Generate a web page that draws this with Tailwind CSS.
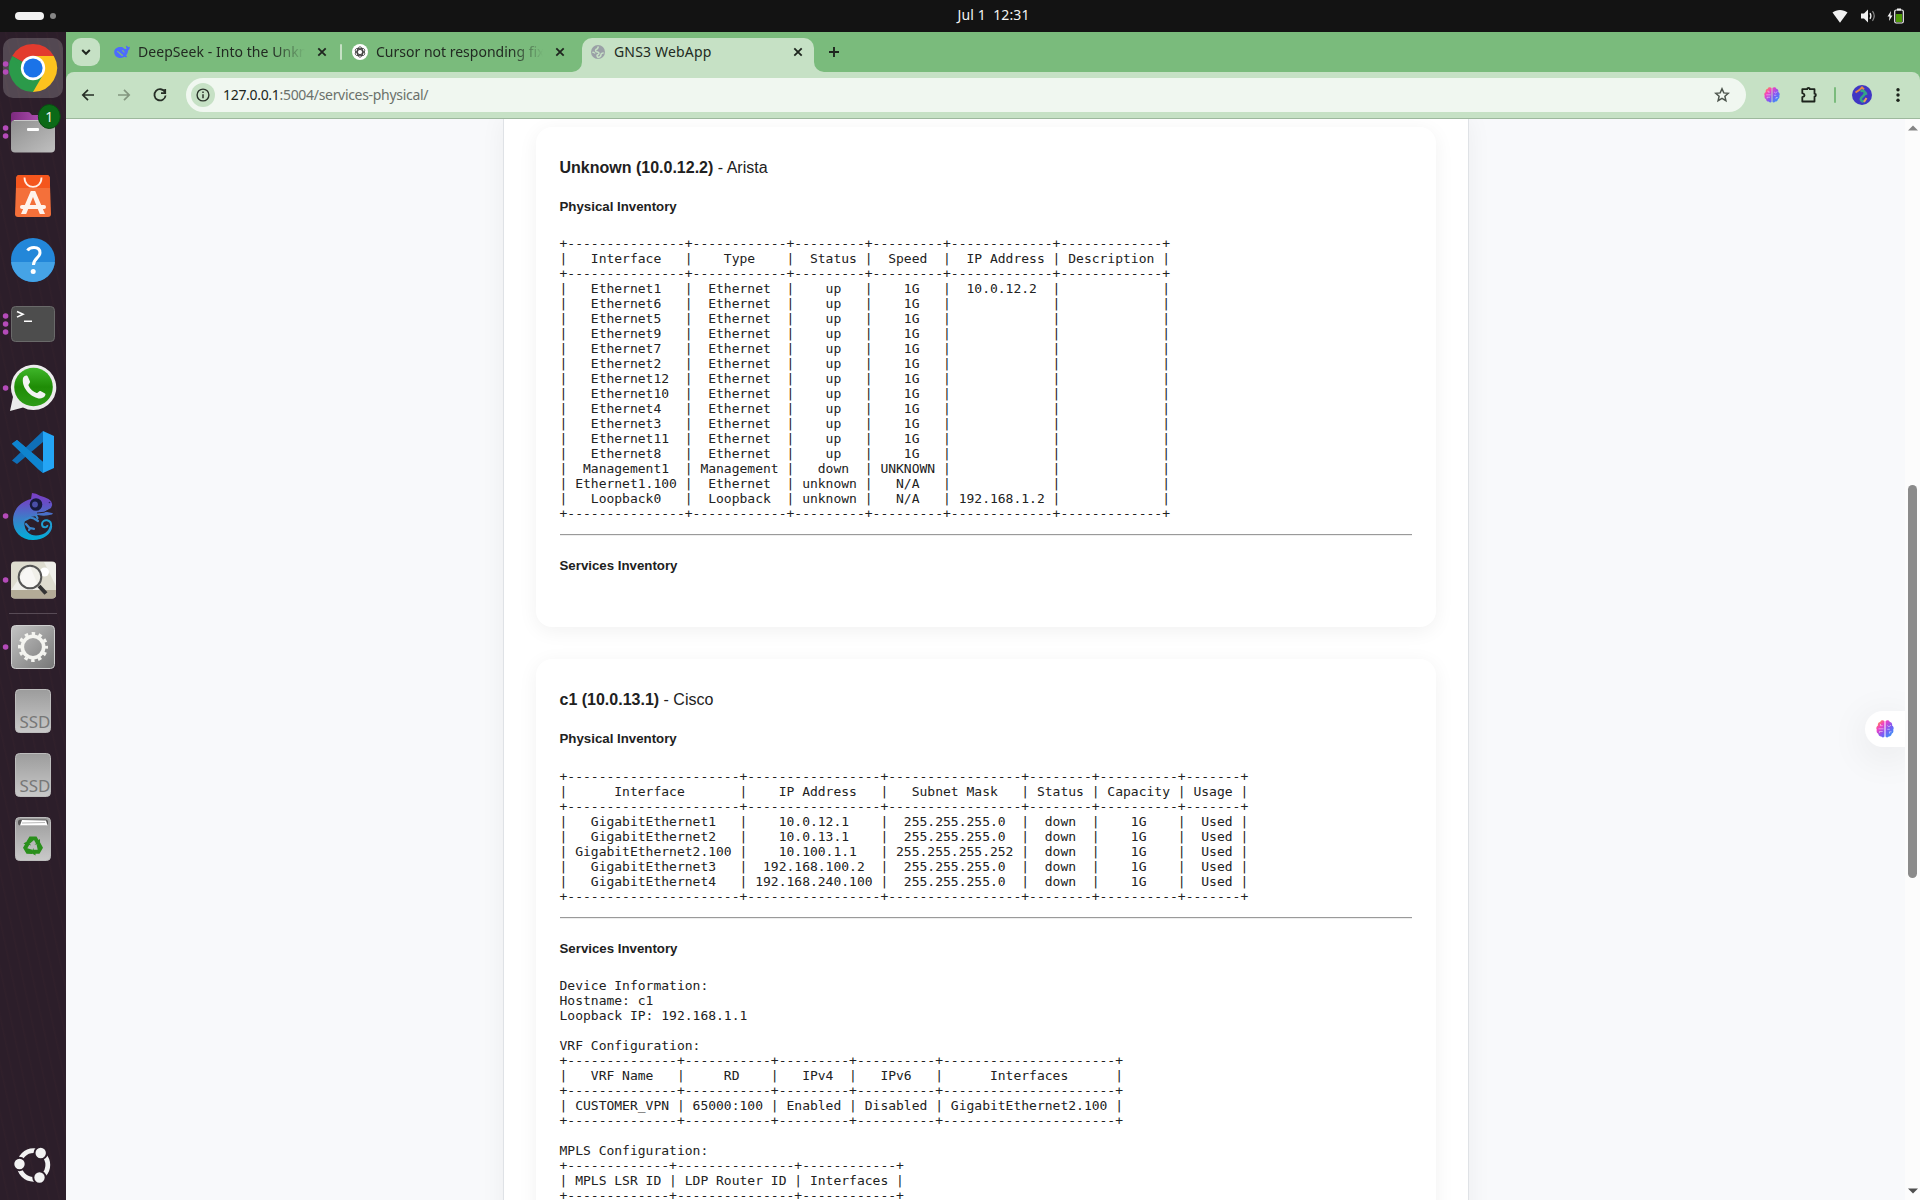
<!DOCTYPE html>
<html lang="en">
<head>
<meta charset="utf-8">
<title>GNS3 WebApp</title>
<script src="https://cdn.jsdelivr.net/npm/@tailwindcss/browser@4"></script>
</head>
<body class="w-[1920px] h-[1200px] overflow-hidden flex flex-col bg-[#f8f9fb] text-[#212121]">

<svg class="absolute w-0 h-0" aria-hidden="true">
  <defs>
    <linearGradient id="brain" x1="0" y1="0" x2="1" y2="1"><stop offset=".05" stop-color="#ff9a3c"/><stop offset=".3" stop-color="#f13fc4"/><stop offset=".6" stop-color="#7a5cf5"/><stop offset="1" stop-color="#22a7f5"/></linearGradient>
    <linearGradient id="folder" x1="0" y1="0" x2="1" y2="1"><stop offset="0" stop-color="#8f8f8f"/><stop offset="1" stop-color="#c0c0c0"/></linearGradient>
    <linearGradient id="purple" x1="0" y1="0" x2="1" y2="0"><stop offset="0" stop-color="#7c2a7f"/><stop offset="1" stop-color="#c45fc6"/></linearGradient>
    <linearGradient id="ssd" x1="0" y1="0" x2="0" y2="1"><stop offset="0" stop-color="#9c9c9c"/><stop offset="1" stop-color="#c9c9c9"/></linearGradient>
    <linearGradient id="gear" x1="0" y1="0" x2="1" y2="1"><stop offset="0" stop-color="#c4c4c4"/><stop offset="1" stop-color="#767676"/></linearGradient>
    <linearGradient id="wa" x1="0" y1="0" x2="0" y2="1"><stop offset="0" stop-color="#3fb62a"/><stop offset=".5" stop-color="#1f8c06"/><stop offset="1" stop-color="#2f9c18"/></linearGradient>
    <linearGradient id="cham" gradientUnits="userSpaceOnUse" x1="0" y1="9" x2="0" y2="56"><stop offset="0" stop-color="#7a3fc4"/><stop offset=".2" stop-color="#6a4cc6"/><stop offset=".55" stop-color="#3b7fc9"/><stop offset="1" stop-color="#00b0d8"/></linearGradient>
    <symbol id="brainIcon" viewBox="0 0 18 18">
      <path d="M8.500 1.200C7.200-.2 4.600.2 4.200 2 2.400 2.200 1.400 3.900 2 5.500.2 6.300-.1 8.800.8 9.800.2 11.600 1 13.300 2.300 13.700 2.500 15.700 4 16.600 5.300 16.400 6.400 18 8.200 17.500 8.500 16.600zM9.500 1.200C10.800-.2 13.400.2 13.800 2c1.800.2 2.800 1.900 2.200 3.500 1.800.8 2.100 3.300 1.200 4.300.6 1.800-.2 3.500-1.500 3.900-.2 2-1.700 2.900-3 2.700-1.100 1.600-2.900 1.100-3.200.2z" fill="url(#brain)"/>
      <path d="M2.500 8.800h5M4.500 4v1.700h2.200M3.500 12.800v-1.300h3.200M11.300 5.500l1.600 1.300L15 5.200M13.500 13.500v-1.700h2M11.300 9.300h2.500" fill="none" stroke="#fff" stroke-opacity=".55" stroke-width=".9"/>
    </symbol>
  </defs>
</svg>

<!-- system bar -->
<header class="h-8 shrink-0 bg-[#131313] flex items-center relative font-['Noto_Sans']">
  <span class="ml-[15px] w-[29px] h-2 rounded-full bg-[#f2f2f2]"></span>
  <span class="ml-[6px] w-[6px] h-[6px] rounded-full bg-[#868686]"></span>
  <span class="absolute left-[957.5px] top-[5px] text-[14px] leading-[19px] tracking-[0.1px] text-[#f2f2f2] whitespace-pre">Jul 1  12:31</span>
  <svg class="ml-auto mr-[14px]" width="74" height="16" viewBox="0 0 74 16">
    <path d="M.5 4.500C4.500 1 11.500 1 15.500 4.500L8 14.700z" fill="#f2f2f2"/>
    <path d="M29 5.500h3l4-4v13l-4-4h-3z" fill="#f2f2f2"/>
    <path d="M38 5.200q1.800 2.800 0 5.600" fill="none" stroke="#f2f2f2" stroke-width="1.300"/>
    <path d="M40.500 3.200q3.500 4.800 0 9.600" fill="none" stroke="#8a8a8a" stroke-width="1.200"/>
    <path d="M59 3l-3.500 5.500h2L57 13l3.500-5.500h-2z" fill="#f2f2f2"/>
    <path d="M65 .5h4v2h-4z" fill="#f2f2f2"/><rect x="62.700" y="2" width="8.600" height="13" rx="1.500" fill="none" stroke="#f2f2f2" stroke-width="1.200"/><path d="M64 6h6v8h-6z" fill="#4e9a06"/>
  </svg>
</header>

<div class="flex flex-1 min-h-0">
  <!-- dock -->
  <aside class="w-[66px] shrink-0 bg-[repeating-linear-gradient(78deg,#2c1e2a_0px,#2c1e2a_7px,#30202b_8px,#2c1e2a_10px)] flex flex-col pt-1">
    <svg width="66" height="64"><rect x="3" y="2" width="60" height="60" rx="10" fill="#fff" fill-opacity=".19"/>
      <g fill="#b44bb9"><circle cx="5.600" cy="28" r="2.800"/><circle cx="5.600" cy="36" r="2.800"/></g>
      <path d="M33 32L12.200 20A24 24 0 0 1 53.800 20z" fill="#e33b2e"/><path d="M33 32L12.200 20A24 24 0 0 0 33 56z" fill="#2b9a4a"/><path d="M33 32L53.800 20A24 24 0 0 1 33 56z" fill="#fcc31e"/>
      <path d="M33 20H53.800L43.400 38L33 56L44 36z" fill="#fcc31e"/><path d="M22.600 38L12.200 20L24 36zM33 56l10.400-18L33 44 22.600 38z" fill="#2b9a4a"/>
      <circle cx="33" cy="32" r="12.200" fill="#fff"/><circle cx="33" cy="32" r="9.600" fill="#1a73e8"/></svg>
    <svg width="66" height="64"><g fill="#b44bb9"><circle cx="5.600" cy="28" r="2.800"/><circle cx="5.600" cy="36" r="2.800"/></g>
      <path d="M11 24V15q0-3 3-3h14q2 0 3 2l1 1h18q4 0 4 4v5z" fill="url(#purple)"/><rect x="11" y="20" width="44" height="32.500" rx="4" fill="url(#folder)"/><path d="M14 20.500h38" stroke="#c8c8c8"/><rect x="27" y="28" width="12" height="3" rx="1" fill="#fff"/>
      <ellipse cx="49.300" cy="16.500" rx="11" ry="12" fill="#0b6a17" stroke="#0a4a12"/><text x="49.300" y="21.500" text-anchor="middle" font-family="Noto Sans" font-size="14" fill="#f2f2f2">1</text></svg>
    <svg width="66" height="64"><path d="M19 11h28q2.500 0 2.700 2.500L51 50q0 3-3 3H18q-3 0-3-3l1.300-36.500Q16.500 11 19 11z" fill="#f4703a"/><path d="M19 11h28q2.500 0 2.700 2.500L50 24H16l.3-10.500Q16.500 11 19 11z" fill="#f4561d"/><path d="M24.500 13.500c0 12.500 17 12.500 17 0" fill="none" stroke="#fff0e6" stroke-width="1.800"/><path d="M30.800 27h4.400L45 50h-5.200L33 33l-6.800 17H21z" fill="#fff3ec"/><rect x="20" y="41" width="26" height="4" rx="2" fill="#fff3ec"/></svg>
    <svg width="66" height="64"><circle cx="33" cy="32" r="22" fill="#2387d9"/><path d="M11.100 34a22 22 0 0 0 43.800 0z" fill="#45a3e6"/><path d="M27.500 22.500q2-3 6.500-3c4 0 6 2.200 6 5.300 0 5-6.500 5.500-6.500 12.200" fill="none" stroke="#fff" stroke-width="3"/><circle cx="33.200" cy="43.500" r="2.500" fill="#fff"/></svg>
    <svg width="66" height="64"><g fill="#b44bb9"><circle cx="5.600" cy="24" r="2.800"/><circle cx="5.600" cy="32" r="2.800"/><circle cx="5.600" cy="40" r="2.800"/></g><rect x="11.500" y="14.500" width="43" height="35" rx="4" fill="#4d4d4d" stroke="#6a6a6a"/><path d="M17 19.500l6 2.800-6 2.800M24 29.200h8" fill="none" stroke="#fff" stroke-width="1.600"/></svg>
    <svg width="66" height="64"><circle cx="5.600" cy="32" r="2.800" fill="#b44bb9"/><path d="M10 55l3-14A22.700 22.700 0 1 1 23 51.500z" fill="#ececec"/><circle cx="33.500" cy="31" r="19.300" fill="url(#wa)"/><path d="M23 22c2-3 4-3 5-1l2 4.500c.5 1.500-2 2.500-1.500 4 2 4 4.500 6 8 7.500 1.500.5 2.500-2.500 4-2l4.500 2.500c1.500 1-1 5-5 5C33 42.500 21 33 23 22z" fill="#f3f3f3"/></svg>
    <svg width="66" height="64"><path d="M12 23.500l5-3.500L43 42v11z" fill="#1588d4"/><path d="M12 40.500l5 3.500L43 22V11z" fill="#0f6fb8"/><path d="M43 11l11 5v32l-11 5z" fill="#24a5f5"/><path d="M12 24l5-4 26 22v11L39 50z" fill="#0e84cf"/></svg>
    <svg width="66" height="64"><circle cx="5.600" cy="32" r="2.800" fill="#b44bb9"/>
      <path d="M32 9q4 0 8 2.800 5 1.200 8.500 3.200 3.500 2 3.700 6l-1.200 3-6 3.500 8 1.700-1 1.300q-7 2-14 .5l-4 1.500C27 33 24 36 24.500 41c.8 6 5 10.500 11.500 10.500 7 0 13-4 13.500-9l2.700-.5C52 50 43 56 33 56 21 56 13 48 13 36 13 26 20 18 31 15z" fill="url(#cham)"/>
      <path d="M51 43.500c1.500-9-9-9-9-3.500 0 4.500 6 4 5.300 1" fill="none" stroke="#1f9fd2" stroke-width="2"/>
      <path d="M25 36l5-2.500 4 1 4 2.500M36 31.500l1.500 2.500M26 40l4 4.500-1 1.500M30 44l4 .8" fill="none" stroke="#3a86cb" stroke-width="2.200" stroke-linecap="round"/>
      <circle cx="36" cy="20.500" r="6.300" fill="#171a3c"/><circle cx="35" cy="20.500" r="2.900" fill="#4a4fa8"/><circle cx="49.500" cy="18.500" r=".8" fill="#2a2560"/><path d="M37 29q8 0 12-3" fill="none" stroke="#2c1e2a" stroke-width="1"/></svg>
    <svg width="66" height="64"><circle cx="5.600" cy="32" r="2.800" fill="#b44bb9"/><rect x="11" y="13.500" width="45" height="37" rx="4" fill="#dedccf"/><path d="M11 42h45v4.500q0 4-4 4H15q-4 0-4-4z" fill="#b3ab97"/><path d="M11 42L29 16l11 26zM44 14h8q4 0 4 4v20z" fill="#efeee9"/><circle cx="44.500" cy="24" r="4.500" fill="#fff"/><circle cx="30" cy="29" r="11.300" fill="#fff" fill-opacity=".55" stroke="#555" stroke-width="2"/><path d="M39 38l7 7.500" stroke="#333" stroke-width="4"/></svg>
    <div class="h-[3px] mx-[9px] flex items-center"><span class="h-px w-full bg-[#584b56]"></span></div>
    <svg width="66" height="64"><circle cx="5.600" cy="32" r="2.800" fill="#b44bb9"/><rect x="11.500" y="10.500" width="43" height="43" rx="4" fill="url(#gear)" stroke="#cfcfcf"/><circle cx="33" cy="32" r="10.700" fill="none" stroke="#f4f4f0" stroke-width="3.600"/><circle cx="33" cy="32" r="13.500" fill="none" stroke="#f4f4f0" stroke-width="3" stroke-dasharray="3.500 3.568" stroke-dashoffset="1.750"/></svg>
    <svg width="66" height="64"><rect x="15.500" y="10.500" width="35" height="43" rx="4" fill="url(#ssd)" stroke="#bdbdbd"/><text x="19.500" y="49" font-family="Noto Sans" font-size="16" fill="#777" textLength="31" lengthAdjust="spacingAndGlyphs">SSD</text></svg>
    <svg width="66" height="64"><rect x="15.500" y="10.500" width="35" height="43" rx="4" fill="url(#ssd)" stroke="#bdbdbd"/><text x="19.500" y="49" font-family="Noto Sans" font-size="16" fill="#777" textLength="31" lengthAdjust="spacingAndGlyphs">SSD</text></svg>
    <svg width="66" height="64"><rect x="15.500" y="10.500" width="35" height="43" rx="4" fill="url(#ssd)" stroke="#bdbdbd"/><rect x="18" y="12.500" width="30" height="6" rx="2.500" fill="#555"/><path d="M20 18.500l2-5.500 24 .5 1.500 5z" fill="#fff"/><path d="M22 16l23-.5" stroke="#999" stroke-width=".7"/>
      <g transform="translate(33 39)" fill="#2a8f1c"><g id="arrow"><path d="M-6.500-4.500L-3.500-9.500H3.500L5.500-6l1.500-1v5.500H1.500l1.500-1L1-6-3-2.500z"/></g><use href="#arrow" transform="rotate(120)"/><use href="#arrow" transform="rotate(240)"/></g></svg>
    <svg class="mt-auto mb-[3px]" width="66" height="64"><g transform="translate(33.500 32)"><circle r="14.300" fill="none" stroke="#f2f2f2" stroke-width="4.800"/><g fill="#f2f2f2" stroke="#2c1e2a" stroke-width="2"><circle cx="-14" cy="-1" r="6.200"/><circle cx="7.200" cy="-12" r="6.200"/><circle cx="6" cy="12.500" r="6.200"/></g></g></svg>
  </aside>

  <main class="flex-1 min-w-0 flex flex-col">
    <!-- tab strip -->
    <div class="h-10 shrink-0 bg-[#7abb7c] flex items-center relative font-['Noto_Sans'] text-[14px] leading-5 text-[#222a22] whitespace-nowrap">
      <div class="ml-[6px] size-7 rounded-[9px] bg-[#c6e1c5] flex items-center justify-center"><svg width="12" height="12" viewBox="0 0 12 12"><path d="M2.200 4L6 7.800 9.800 4" fill="none" stroke="#1f261f" stroke-width="2"/></svg></div>
      <svg class="ml-[14px]" width="16" height="16" viewBox="0 0 16 16"><path d="M15.800 2.500c-1 .8-2 .6-2.600-.2-.5-.8-1.400-.6-1.300.3.100.8.400 1.300.9 1.700-.8 1-1.500 1-2.700.1C8.300 3 8 2.900 7 3 3 2.500.3 5 .2 8c0 4 3.300 6.200 6.500 6 1.600 0 2.800-.6 3.500-1.200 1.500.8 3 .3 2.800-.4-.2-.4-.8-.2-1-.8 1.500-1.600 2-3.500 2-5.100 1.200-.5 2-2 1.800-4z" fill="#4d6bfe"/><path d="M3 7.500c2.500 0 3.500 4 6 4M8 6.500c1 0 2 .8 2.200 2" fill="none" stroke="#7abb7c" stroke-width="1.200"/></svg>
      <span class="ml-2 w-[167px] overflow-hidden tracking-[0.05px] [mask-image:linear-gradient(to_right,#000_135px,transparent_167px)]">DeepSeek - Into the Unkn</span>
      <svg class="ml-[11px]" width="12" height="12" viewBox="0 0 12 12"><path d="M2.300 2.300l7.400 7.400M9.700 2.300L2.300 9.700" stroke="#1f261f" stroke-width="1.800"/></svg>
      <span class="ml-[12px] w-[2px] h-4 rounded bg-[#c6e1c5]"></span>
      <svg class="ml-[10px]" width="16" height="16" viewBox="0 0 16 16"><circle cx="8" cy="8" r="8" fill="#fff"/><g fill="none" stroke="#333" stroke-width=".8"><ellipse cx="8" cy="8" rx="2.900" ry="5.200"/><ellipse cx="8" cy="8" rx="2.900" ry="5.200" transform="rotate(60 8 8)"/><ellipse cx="8" cy="8" rx="2.900" ry="5.200" transform="rotate(120 8 8)"/><path d="M8 5.300l2.400 1.400v2.700L8 10.700 5.600 9.400V6.700z"/></g></svg>
      <span class="ml-2 w-[167px] overflow-hidden [mask-image:linear-gradient(to_right,#000_135px,transparent_167px)]">Cursor not responding fix</span>
      <svg class="ml-[11px]" width="12" height="12" viewBox="0 0 12 12"><path d="M2.300 2.300l7.400 7.400M9.700 2.300L2.300 9.700" stroke="#1f261f" stroke-width="1.800"/></svg>
      <div class="ml-4 w-[232px] h-[34px] self-end rounded-t-[10px] bg-[#c6e1c5] flex items-center relative pb-[6px]">
        <svg class="absolute -left-[10px] bottom-0" width="10" height="10"><path d="M10 0v10H0A10 10 0 0 0 10 0z" fill="#c6e1c5"/></svg>
        <svg class="absolute -right-[10px] bottom-0" width="10" height="10"><path d="M0 0v10h10A10 10 0 0 1 0 0z" fill="#c6e1c5"/></svg>
        <svg class="ml-[9px]" width="14" height="14" viewBox="0 0 14 14"><circle cx="7" cy="7" r="7" fill="#9aa0a6"/><path d="M7.500 1.500c-1 1-.3 2-1.500 2.500S4 5.500 5 6.500s3 0 3 1.800-2 1.200-2 2.200 .5 1.500 1 2c2-.2 3-1.500 3-3s2-.8 2.500-2M1.500 7c1 .5 2 .5 2.500 1.500" fill="none" stroke="#c6e1c5" stroke-width="1.500"/></svg>
        <span class="ml-[9px] w-[120px] tracking-[0.18px]">GNS3 WebApp</span>
        <svg class="ml-auto mr-[10px]" width="12" height="12" viewBox="0 0 12 12"><path d="M2.300 2.300l7.400 7.400M9.700 2.300L2.300 9.700" stroke="#1f261f" stroke-width="1.800"/></svg>
      </div>
      <svg class="ml-[14px]" width="12" height="12" viewBox="0 0 12 12"><path d="M6 1v10M1 6h10" stroke="#1f261f" stroke-width="1.900"/></svg>
    </div>

    <!-- toolbar -->
    <div class="h-[47px] shrink-0 bg-[#7abb7c]">
    <div class="h-full bg-[#c6e1c5] border-b border-[#9db89d] rounded-t-[8px] flex items-center">
      <svg class="ml-[14px]" width="16" height="16" viewBox="0 0 16 16"><path d="M14 8H2.800M8 2.800L2.800 8 8 13.200" fill="none" stroke="#262e26" stroke-width="1.700"/></svg>
      <svg class="ml-[20px]" width="16" height="16" viewBox="0 0 16 16"><path d="M2 8h11.200M8 2.800L13.200 8 8 13.200" fill="none" stroke="#83967f" stroke-width="1.700"/></svg>
      <svg class="ml-[20px]" width="16" height="16" viewBox="0 0 16 16"><path d="M13 5.200A5.600 5.600 0 1 0 13.600 8.500M13.200 2v4.200H9" fill="none" stroke="#262e26" stroke-width="1.800"/></svg>
      <div class="ml-[18px] w-[1560px] h-[34px] rounded-full bg-[#f0f7f0] flex items-center pl-[5px] pr-4">
        <span class="size-6 rounded-full bg-[#c6e1c5] flex items-center justify-center"><svg width="14" height="14" viewBox="0 0 14 14"><circle cx="7" cy="7" r="5.900" fill="none" stroke="#2b332b" stroke-width="1.400"/><path d="M7 6.200v4M7 3.500v1.600" stroke="#2b332b" stroke-width="1.500"/></svg></span>
        <span class="ml-2 font-['Noto_Sans'] text-[14px] leading-5 tracking-[-0.31px] text-[#6b716b]"><span class="text-[#202620]">127.0.0.1</span>:5004/services-physical/</span>
        <svg class="ml-auto" width="16" height="16" viewBox="0 0 16 16"><path d="M8 1.800l1.800 4.100 4.500.4-3.400 3 1 4.400L8 11.400l-3.900 2.300 1-4.400-3.400-3 4.500-.4z" fill="none" stroke="#4d554d" stroke-width="1.500"/></svg>
      </div>
      <svg class="ml-[18px]" width="16" height="16"><use href="#brainIcon"/></svg>
      <svg class="ml-5" width="18" height="18" viewBox="0 0 18 18"><path d="M3 3.200h4.200a1.300 1.300 0 0 1 2.600 0h4.700v4.500a1.300 1.300 0 0 1 0 2.800v5H2.300v-4.300c3-.8 3-3 0-4V3.200z" fill="none" stroke="#1c231c" stroke-width="1.800" stroke-linejoin="round"/></svg>
      <span class="ml-[16px] w-[2px] h-4 bg-[#7abb7c] rounded"></span>
      <svg class="ml-4" width="20" height="20" viewBox="0 0 20 20"><circle cx="10" cy="10" r="10" fill="#4036c4"/><path d="M3.500 7.500L8 4.500l2-2 2 2" fill="none" stroke="#e2874a" stroke-width="2"/><path d="M8.500 6c5-1 5 2 3.500 4s-4 3-3 5 3 2 2 0M13 9l2-1" fill="none" stroke="#35a487" stroke-width="2.600"/><path d="M12 17l2.500-4" stroke="#e8a15a" stroke-width="2"/></svg>
      <svg class="ml-[18px]" width="16" height="16" viewBox="0 0 16 16"><g fill="#1c231c"><circle cx="8" cy="2.700" r="1.700"/><circle cx="8" cy="8" r="1.700"/><circle cx="8" cy="13.300" r="1.700"/></g></svg>
    </div>
    </div>

    <!-- page -->
    <div class="flex-1 min-h-0 flex relative">
      <div class="flex-1 min-w-0 overflow-hidden flex items-start pl-[436.5px]">
        <div class="w-[966px] h-[1400px] shrink-0 bg-white border-x border-[#dfe2e6] shadow-[0_0_24px_rgba(0,0,0,0.05)] px-8 pt-2 font-['Liberation_Sans'] text-[#212121]">
          <section class="h-[500px] rounded-2xl bg-white shadow-[0_4px_20px_rgba(0,0,0,0.06)] px-6 pt-[31px] mb-8">
            <h3 class="text-[16px] leading-5"><b>Unknown (10.0.12.2)</b> - Arista</h3>
            <h4 class="mt-[21px] text-[13.28px] leading-4 font-bold">Physical Inventory</h4>
            <pre id="arista" class="mt-[21px] font-['DejaVu_Sans_Mono'] text-[13px] leading-[15px]"></pre>
            <hr class="mt-[13px] h-[2px] border-t border-b border-t-[#9a9a9a] border-b-[#eeeeee]">
            <h4 class="mt-[22px] text-[13.28px] leading-4 font-bold">Services Inventory</h4>
          </section>
          <section class="h-[760px] rounded-2xl bg-white shadow-[0_4px_20px_rgba(0,0,0,0.06)] px-6 pt-[31px]">
            <h3 class="text-[16px] leading-5"><b>c1 (10.0.13.1)</b> - Cisco</h3>
            <h4 class="mt-[21px] text-[13.28px] leading-4 font-bold">Physical Inventory</h4>
            <pre id="cisco" class="mt-[22px] font-['DejaVu_Sans_Mono'] text-[13px] leading-[15px]"></pre>
            <hr class="mt-[13px] h-[2px] border-t border-b border-t-[#9a9a9a] border-b-[#eeeeee]">
            <h4 class="mt-[22px] text-[13.28px] leading-4 font-bold">Services Inventory</h4>
            <pre id="services" class="mt-[21px] font-['DejaVu_Sans_Mono'] text-[13px] leading-[15px]"></pre>
          </section>
        </div>
      </div>
      <div class="w-[15px] shrink-0 bg-[#fcfcfc] flex flex-col items-center">
        <svg class="mt-[6px]" width="10" height="6"><path d="M0 5.500L5 .5l5 5z" fill="#858585"/></svg>
        <span class="mt-[354px] w-[9px] h-[393px] rounded-full bg-[#8b8b8b]"></span>
        <svg class="mt-auto mb-[6px]" width="10" height="6"><path d="M0 .5l5 5 5-5z" fill="#4f4f4f"/></svg>
      </div>
      <div class="absolute right-[15px] top-[592px] w-[40px] h-[36px] overflow-visible rounded-l-full bg-white shadow-[0_8px_40px_rgba(0,0,0,0.09)] [clip-path:inset(-80px_0px_-90px_-80px)] flex items-center pl-[11px]"><svg width="18" height="18"><use href="#brainIcon"/></svg></div>
    </div>
  </main>
</div>

<script>
// Centred ASCII table; an odd leftover space goes left for even-length text, right for odd-length text.
function center(text, width) {
  const extra = width - text.length, half = Math.floor(extra / 2);
  const left = extra % 2 && text.length % 2 === 0 ? half + 1 : half;
  return ' '.repeat(left) + text + ' '.repeat(extra - left);
}
function table(rows) {
  const w = rows[0].map((_, i) => Math.max(...rows.map(r => r[i].length)));
  const rule = '+' + w.map(n => '-'.repeat(n + 2)).join('+') + '+';
  const line = r => '| ' + r.map((c, i) => center(c, w[i])).join(' | ') + ' |';
  return [rule, line(rows[0]), rule, ...rows.slice(1).map(line), rule].join('\n');
}
const eth = n => ['Ethernet' + n, 'Ethernet', 'up', '1G', n === 1 ? '10.0.12.2' : '', ''];
document.getElementById('arista').textContent = table([
  ['Interface', 'Type', 'Status', 'Speed', 'IP Address', 'Description'],
  ...[1, 6, 5, 9, 7, 2, 12, 10, 4, 3, 11, 8].map(eth),
  ['Management1', 'Management', 'down', 'UNKNOWN', '', ''],
  ['Ethernet1.100', 'Ethernet', 'unknown', 'N/A', '', ''],
  ['Loopback0', 'Loopback', 'unknown', 'N/A', '192.168.1.2', '']
]);
document.getElementById('cisco').textContent = table([
  ['Interface', 'IP Address', 'Subnet Mask', 'Status', 'Capacity', 'Usage'],
  ['GigabitEthernet1', '10.0.12.1', '255.255.255.0', 'down', '1G', 'Used'],
  ['GigabitEthernet2', '10.0.13.1', '255.255.255.0', 'down', '1G', 'Used'],
  ['GigabitEthernet2.100', '10.100.1.1', '255.255.255.252', 'down', '1G', 'Used'],
  ['GigabitEthernet3', '192.168.100.2', '255.255.255.0', 'down', '1G', 'Used'],
  ['GigabitEthernet4', '192.168.240.100', '255.255.255.0', 'down', '1G', 'Used']
]);
document.getElementById('services').textContent =
  'Device Information:\nHostname: c1\nLoopback IP: 192.168.1.1\n\nVRF Configuration:\n' +
  table([['VRF Name', 'RD', 'IPv4', 'IPv6', 'Interfaces'], ['CUSTOMER_VPN', '65000:100', 'Enabled', 'Disabled', 'GigabitEthernet2.100']]) +
  '\n\nMPLS Configuration:\n' +
  table([['MPLS LSR ID', 'LDP Router ID', 'Interfaces']]).split('\n').slice(0, 3).join('\n');
</script>
</body>
</html>
